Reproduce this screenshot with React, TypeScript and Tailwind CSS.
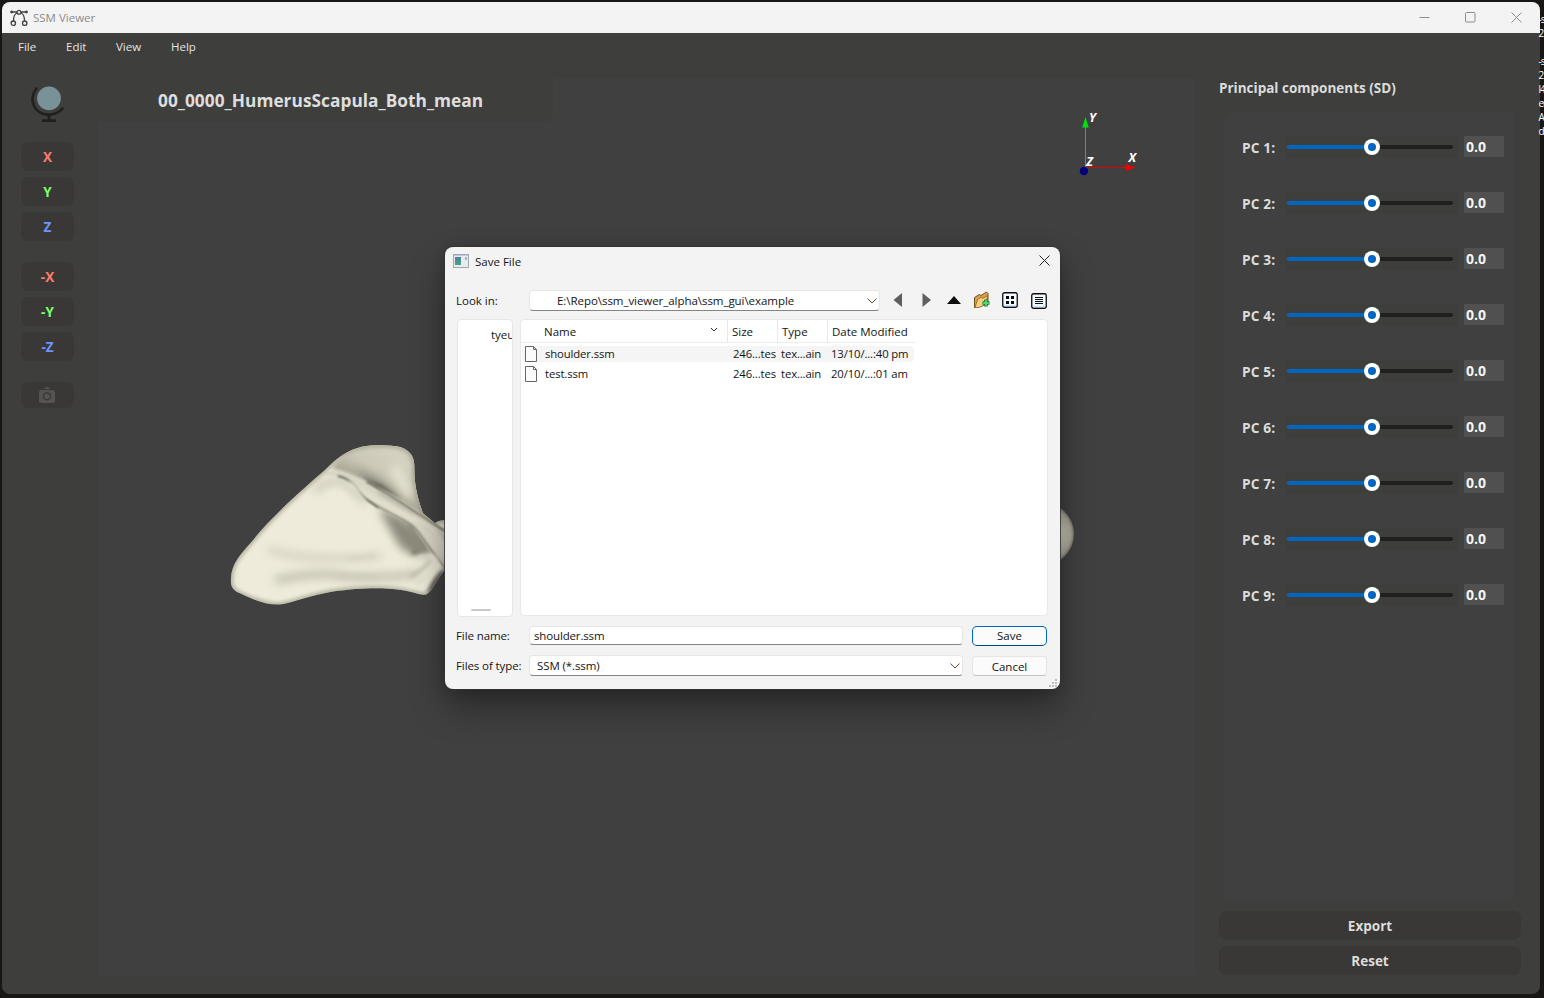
import React from "react";

const axisButtons = [
  [
    { label: "X", tone: "text-[#ff7b6e]" },
    { label: "Y", tone: "text-[#7dff6e]" },
    { label: "Z", tone: "text-[#6e94ff]" },
  ],
  [
    { label: "-X", tone: "text-[#ff7b6e]" },
    { label: "-Y", tone: "text-[#7dff6e]" },
    { label: "-Z", tone: "text-[#6e94ff]" },
  ],
];

const components = [1, 2, 3, 4, 5, 6, 7, 8, 9];

const files = [
  { name: "shoulder.ssm", size: "246...tes", type: "tex...ain", date: "13/10/...:40 pm" },
  { name: "test.ssm", size: "246...tes", type: "tex...ain", date: "20/10/...:01 am" },
];

function TitleBar() {
  return (
    <div className="flex h-[31px] shrink-0 items-center bg-[#f3f3f3] pl-2">
      <svg width="18" height="18" viewBox="0 0 18 18" fill="none" stroke="#444" strokeWidth="1.3">
        <circle cx="9" cy="3.200" r="1.900" />
        <path d="M2 3h5M11 3h5M7.200 4C4 5 3.500 8 3.500 12M10.800 4C14 5 14.500 8 14.500 12" />
        <circle cx="3.300" cy="14.200" r="2.200" />
        <circle cx="14.700" cy="14.200" r="2.200" />
        <circle cx="1.600" cy="3" r=".8" fill="#444" />
        <circle cx="16.400" cy="3" r=".8" fill="#444" />
      </svg>
      <span className="ml-[5px] text-[11.5px] text-[#8b8b8b]">SSM Viewer</span>
      <div className="ml-auto flex items-center gap-[35px] pr-[18px]">
        <svg width="11" height="11" viewBox="0 0 11 11" stroke="#8d8d8d"><path d="M.5 5.500h10" /></svg>
        <svg width="11" height="11" viewBox="0 0 11 11" fill="none" stroke="#8d8d8d"><rect x=".5" y=".5" width="9.500" height="9.500" rx="1" /></svg>
        <svg width="11" height="11" viewBox="0 0 11 11" stroke="#8d8d8d"><path d="M.5 .5l10 10M10.500 .5l-10 10" /></svg>
      </div>
    </div>
  );
}

function Sidebar() {
  return (
    <div className="flex w-24 shrink-0 flex-col pl-[19px] pt-[25px]">
      <svg className="ml-2.5" width="34" height="37" viewBox="0 0 34 37" fill="none">
        <path d="M5.500 2.500C-.5 10 .5 20 7.500 25.500C15 31 26 29 31.500 22.500" stroke="#20201e" strokeWidth="2.700" strokeLinecap="round" />
        <path d="M18 28v6M11 34.700h14" stroke="#20201e" strokeWidth="2.800" />
        <circle cx="18" cy="12.300" r="11.900" fill="#789297" />
      </svg>
      <div className="mt-[19px] flex flex-col gap-[21px]">
        {axisButtons.map((group, i) => (
          <div key={i} className="flex flex-col gap-1.5">
            {group.map((b) => (
              <button key={b.label} className={`h-[29px] w-[53px] rounded-[7px] bg-[#3a3836] pt-px text-[13.500px] font-bold leading-[28px] ${b.tone}`}>
                {b.label}
              </button>
            ))}
          </div>
        ))}
      </div>
      <button className="mt-[21px] flex h-[26px] w-[53px] items-center justify-center rounded-[7px] bg-[#3a3836] pr-px">
        <svg width="16" height="16" viewBox="0 0 16 16">
          <path d="M5 2Q5.500 0 8 0T11 2Z" fill="#535353" />
          <rect y="3" width="16" height="13" rx="2.500" fill="#535353" />
          <circle cx="8" cy="9.300" r="3.500" fill="none" stroke="#3a3836" strokeWidth="1.200" />
        </svg>
      </button>
    </div>
  );
}

function AxisGizmo() {
  return (
    <svg className="absolute left-[972px] top-[22px]" width="80" height="80" viewBox="0 0 80 80" fontFamily="'Open Sans', sans-serif" fontStyle="italic" fontWeight="700" fontSize="12.500">
      <path d="M15.500 70V26" stroke="#00d800" />
      <path d="M16 67.500h45" stroke="#e00000" />
      <path d="M15.500 17l3.300 10.500h-6.600z" fill="#00e010" />
      <path d="M65.500 67.600l-10 3.500v-7z" fill="#f00000" />
      <circle cx="13.900" cy="71" r="4.200" fill="#00007a" />
      <g fill="#fff">
        <text x="19" y="21.800">Y</text>
        <text x="16.200" y="65.500">Z</text>
        <text x="58.500" y="62">X</text>
      </g>
    </svg>
  );
}

function BoneModel() {
  const outline =
    "M48 445C50 400 75 375 110 335C170 260 260 180 330 120C370 78 400 60 440 50C480 43 530 45 555 51C590 62 598 85 598 110C597 170 610 210 624 250L660 280C672 270 690 268 720 272V420H690C670 440 655 480 635 493C620 498 600 486 560 480C500 472 440 473 350 485C290 495 240 515 200 523C160 528 110 507 75 490C50 480 46 465 48 445Z";
  return (
    <>
      <svg className="absolute left-[117px] top-[352px]" width="240" height="190" viewBox="0 0 720 570">
        <defs>
          <clipPath id="bone"><path d={outline} /></clipPath>
          <filter id="b2" filterUnits="userSpaceOnUse" x="0" y="0" width="720" height="570"><feGaussianBlur stdDeviation="2.500" /></filter>
          <filter id="b4" filterUnits="userSpaceOnUse" x="0" y="0" width="720" height="570"><feGaussianBlur stdDeviation="6" /></filter>
          <filter id="b12" filterUnits="userSpaceOnUse" x="0" y="0" width="720" height="570"><feGaussianBlur stdDeviation="15" /></filter>
          <linearGradient id="blade" x1="430" y1="150" x2="490" y2="45" gradientUnits="userSpaceOnUse">
            <stop offset="0" stopColor="#aaa797" />
            <stop offset=".45" stopColor="#cbc8b7" />
            <stop offset="1" stopColor="#d4d1c0" />
          </linearGradient>
        </defs>
        <g clipPath="url(#bone)">
          <rect width="720" height="570" fill="#eeebda" />
          <path d="M350 115C400 50 480 30 565 41C620 80 600 170 640 270L450 150Z" fill="url(#blade)" filter="url(#b4)" />
          <path d="M535 110Q560 150 580 205" stroke="#e6e3d2" strokeWidth="30" fill="none" filter="url(#b12)" />
          <path d="M415 125C475 120 530 190 610 245L470 165Z" fill="#77756a" opacity=".7" filter="url(#b12)" />
          <path d="M435 140L500 165L560 210L470 165Z" fill="#55544c" filter="url(#b4)" />
          <path d="M300 185Q335 145 385 155Q420 180 450 220" stroke="#b3b0a0" strokeWidth="12" fill="none" filter="url(#b12)" />
          <path d="M490 235C550 250 620 290 650 370C600 385 560 370 540 325Z" fill="#8a887a" filter="url(#b12)" />
          <path d="M575 278C600 290 625 315 642 362C615 366 595 350 590 325Z" fill="#8d8b7c" filter="url(#b4)" />
          <path d="M325 134C350 118 370 120 400 134L460 155L540 200L620 252L690 304L720 320V412H690L650 370L590 285L490 234L450 200L395 142Z" fill="#d8d5c4" filter="url(#b2)" />
          <path d="M455 208C500 240 570 265 598 293C625 320 635 350 690 413" fill="none" stroke="#77756a" strokeWidth="5" filter="url(#b2)" />
          <path d="M368 138C395 142 412 158 425 172C440 189 445 200 460 211L490 233" fill="none" stroke="#45443d" strokeWidth="4" filter="url(#b2)" />
          <path d="M455 155C520 190 580 235 690 303" fill="none" stroke="#4e4c43" strokeWidth="5" filter="url(#b2)" />
          <path d="M490 185Q560 225 610 265T700 335" fill="none" stroke="#b2afa0" strokeWidth="10" filter="url(#b4)" />
          <path d="M400 155Q490 223 590 262T690 375" fill="none" stroke="#e6e3d1" strokeWidth="12" filter="url(#b4)" />
          <path d="M590 366Q620 376 645 370" stroke="#3c3b34" strokeWidth="7" fill="none" filter="url(#b4)" />
          <path d="M605 386Q645 365 665 395Q645 440 600 465" stroke="#e6e3d1" strokeWidth="16" fill="none" filter="url(#b4)" />
          <path d="M638 490Q650 445 690 415V490Z" fill="#33322d" filter="url(#b4)" />
          <path d="M160 360Q310 400 500 378" stroke="#d0cdbb" strokeWidth="18" fill="none" filter="url(#b12)" />
          <path d="M400 386Q440 384 480 375" stroke="#d0cdbb" strokeWidth="6" fill="none" filter="url(#b4)" />
          <path d="M180 452Q300 425 375 437T610 432" stroke="#bcb9a7" strokeWidth="20" fill="none" filter="url(#b12)" />
          <path d="M370 437H480" stroke="#cfccba" strokeWidth="8" fill="none" filter="url(#b4)" />
          <path d="M585 440Q625 420 648 390" stroke="#b3b0a0" strokeWidth="8" fill="none" filter="url(#b4)" />
          <path d={outline} fill="none" stroke="#8b8977" strokeWidth="8" filter="url(#b4)" />
        </g>
      </svg>
      <svg className="absolute left-[928px] top-[424px]" width="52" height="66" viewBox="0 0 52 66">
        <defs>
          <radialGradient id="head"><stop offset=".6" stopColor="#cfccba" /><stop offset=".9" stopColor="#a9a797" /><stop offset="1" stopColor="#77756a" /></radialGradient>
        </defs>
        <ellipse cx="15" cy="32" rx="33" ry="32" fill="url(#head)" />
      </svg>
    </>
  );
}

function Viewport() {
  return (
    <div className="relative mt-[17px] h-[897px] w-[1097px] shrink-0 overflow-hidden bg-[#404040]">
      <div className="h-11 w-[455px] rounded-br-md bg-[#3e3e3c] pl-[60px] text-[17.300px] font-bold leading-[45px] tracking-[0.03px] text-[#dedede]">
        00_0000_HumerusScapula_Both_mean
      </div>
      <AxisGizmo />
      <BoneModel />
    </div>
  );
}

function ComponentPanel() {
  return (
    <div className="flex flex-col pl-6 pt-[17px] font-bold text-[#dcdcdc]">
      <h2 className="h-[35px] text-[13.500px] leading-[20px]">Principal components (SD)</h2>
      <div className="ml-[5px] flex h-[787px] w-[290px] flex-col gap-[34px] rounded-l-[7px] bg-[#404040] pl-[18px] pt-[23px]">
        {components.map((n) => (
          <div key={n} className="flex h-[22px] items-center">
            <span className="w-11 pt-[3px] text-[13.700px] tracking-[0.15px]">PC {n}:</span>
            <div className="relative flex h-[22px] w-[172px] items-center bg-[#3e3e3c] pl-px">
              <div className="h-1 w-[85px] rounded-l-sm bg-[#0067c0]" />
              <div className="h-1 w-[81px] rounded-r-sm bg-[#20201e]" />
              <div className="absolute left-[78px] top-[3px] flex size-4 items-center justify-center rounded-full bg-white">
                <div className="size-[7.500px] rounded-full bg-[#0067c0]" />
              </div>
            </div>
            <div className="mb-px ml-1.5 h-[21px] w-10 bg-[#505050] pl-0.5 text-[14px] leading-[21px] text-[#f5f5f5]">0.0</div>
          </div>
        ))}
      </div>
      <button className="mt-[11px] h-[29px] w-[302px] rounded-lg bg-[#3a3836] pt-0.5 text-[13.500px]">Export</button>
      <button className="mt-1.5 h-[29px] w-[302px] rounded-lg bg-[#3a3836] pt-0.5 text-[13.500px]">Reset</button>
    </div>
  );
}

function Chevron() {
  return (
    <svg className="ml-auto" width="10" height="6" viewBox="0 0 10 6" fill="none" stroke="#6b4a35"><path d="M.5 .5L5 5L9.500 .5" /></svg>
  );
}

function DialogTools() {
  return (
    <div className="ml-[13px] flex items-center">
      <svg className="mb-px" width="9" height="14" viewBox="0 0 9 14"><path d="M9 0v14L0.500 7z" fill="#5f5f5f" /></svg>
      <svg className="mb-px ml-5" width="9" height="14" viewBox="0 0 9 14"><path d="M.5 0v14L9 7z" fill="#5f5f5f" /></svg>
      <svg className="mb-px ml-4" width="14" height="8" viewBox="0 0 14 8"><path d="M0 8h14L7 0z" fill="#0c0c0c" /></svg>
      <svg className="mb-px ml-3" width="18" height="18" viewBox="0 0 18 18">
        <path d="M1.500 16.500V6.500L6.500 3.500L8 4.500L13.500 1L15 2.500V13Z" fill="#dca04a" stroke="#76501c" />
        <path d="M2 16.500L4.500 8.500L8.500 6L9.500 7.500L14.500 4.500L13 13.500L6 16.500Z" fill="#f8cf7e" stroke="#85602a" strokeWidth=".8" />
        <path d="M13 8.500v7M9.500 12h7" stroke="#1a7c38" strokeWidth="3.600" />
        <path d="M13 9.300v5.400M10.300 12h5.400" stroke="#4cdc70" strokeWidth="1.900" />
      </svg>
      <svg className="mb-px ml-[11px]" width="16" height="16" viewBox="0 0 16 16">
        <rect x=".75" y=".75" width="14.500" height="14.500" rx="1.800" fill="#f5faff" stroke="#0b0d12" strokeWidth="1.300" />
        <path d="M2 13.800h12" stroke="#bcd6f4" />
        <path d="M4 4h3v3H4zM9 4h3v3H9zM4 9h3v3H4zM9 9h3v3H9z" fill="#080808" />
      </svg>
      <svg className="ml-[13px] mt-px" width="16" height="16" viewBox="0 0 16 16">
        <rect x=".75" y=".75" width="14.500" height="14.500" rx="1.800" fill="#f5faff" stroke="#0b0d12" strokeWidth="1.300" />
        <path d="M2 13.800h12" stroke="#bcd6f4" />
        <path d="M4 4.500h8M4 6.500h8M4 8.500h8M4 10.500h8" stroke="#111" />
      </svg>
    </div>
  );
}

function FileIcon() {
  return (
    <svg className="mb-px shrink-0" width="12" height="16" viewBox="0 0 12 16" fill="#fbfbfb" stroke="#666"><path d="M.5 .5h8l3 3v12H.500zM8.500 .5v3h3" /></svg>
  );
}

function FileTable() {
  return (
    <div className="ml-[7px] h-[297px] w-[528px] overflow-hidden rounded-[4px] border border-[#e8e8e8] bg-white">
      <div className="flex h-[23px] w-[395px] border-b border-[#ececec] leading-[24px]">
        <div className="flex w-[207px] border-r border-[#e8e8e8] pl-[23px]">
          Name
          <svg className="ml-auto mr-[9px] mt-[7px]" width="8" height="6" viewBox="0 0 8 6" fill="none" stroke="#333"><path d="M1 1l3 3l3-3" /></svg>
        </div>
        <div className="w-[50px] border-r border-[#e8e8e8] pl-1">Size</div>
        <div className="w-[50px] border-r border-[#e8e8e8] pl-1">Type</div>
        <div className="pl-1">Date Modified</div>
      </div>
      <div className="pt-px text-[11.300px] tracking-[-0.12px]">
        {files.map((f, i) => (
          <div key={f.name} className="flex h-5 items-center">
            <div className={`ml-px flex h-4 w-[392px] items-center rounded pl-[3px] ${i === 0 ? "bg-[#f5f5f5]" : ""}`}>
              <FileIcon />
              <span className="ml-2 w-[188px]">{f.name}</span>
              <span className="w-12 whitespace-nowrap">{f.size}</span>
              <span className="w-[50px] whitespace-nowrap">{f.type}</span>
              <span className="whitespace-nowrap">{f.date}</span>
            </div>
          </div>
        ))}
      </div>
    </div>
  );
}

function SaveDialog() {
  return (
    <div className="absolute left-[445px] top-[247px] flex h-[442px] w-[615px] flex-col rounded-lg bg-[#f3f3f3] text-[11.500px] leading-4 text-[#141414] shadow-[0_0_0_1px_rgba(50,50,50,0.8),0_18px_34px_rgba(0,0,0,0.36),0_2px_14px_rgba(0,0,0,0.16)]">
      <div className="flex h-[43px] items-start pl-2 pt-[7px]">
        <svg width="16" height="14" viewBox="0 0 16 14">
          <defs><linearGradient id="app" x2="0" y2="1"><stop stopColor="#4d7db3" /><stop offset="1" stopColor="#4ba477" /></linearGradient></defs>
          <rect x=".5" y=".5" width="15" height="13" fill="#e8ebed" stroke="#a0a8b2" />
          <path d="M1 1.500h14" stroke="#c3cad1" />
          <path d="M2 3h6v8H2z" fill="url(#app)" />
          <path d="M12 3h2v3h-2z" fill="#8fbccb" />
        </svg>
        <span className="ml-1.5">Save File</span>
        <svg className="ml-auto mr-2.5 mt-px" width="11" height="11" viewBox="0 0 11 11" stroke="#222"><path d="M.5 .5l10 10M10.500 .5l-10 10" /></svg>
      </div>
      <div className="flex h-[21px] items-center pl-[11px]">
        <span className="w-[73px] shrink-0">Look in:</span>
        <div className="flex h-[21px] w-[351px] shrink-0 items-center rounded-[4px] border border-[#e6e6e6] border-b-[#858585] bg-white pl-[27px] pr-0.5 tracking-[-0.05px]">
          E:\Repo\ssm_viewer_alpha\ssm_gui\example
          <Chevron />
        </div>
        <DialogTools />
      </div>
      <div className="mt-2 flex pl-3">
        <div className="relative h-[298px] w-[56px] overflow-hidden rounded-[4px] border border-[#e6e6e6] bg-white pl-[33px] pt-[7px]">
          tyeu
          <div className="absolute bottom-[5px] left-[13px] h-[2px] w-5 rounded bg-[#c9c9c9]" />
        </div>
        <FileTable />
      </div>
      <div className="mt-[9px] flex h-5 items-center pl-[11px]">
        <span className="w-[73px] shrink-0 tracking-[-0.1px]">File name:</span>
        <div className="mb-px h-[19px] w-[434px] shrink-0 rounded-[4px] border border-[#e6e6e6] border-b-[#858585] bg-white pl-1 leading-[18px] tracking-[-0.15px]">shoulder.ssm</div>
        <button className="ml-[9px] h-5 w-[75px] shrink-0 rounded-[5px] border border-[#0067c0] border-b-[#004a8c] bg-[#fbfbfb]">Save</button>
      </div>
      <div className="mt-[9px] flex h-[21px] items-center pl-[11px]">
        <span className="w-[73px] shrink-0 tracking-[-0.1px]">Files of type:</span>
        <div className="flex h-[21px] w-[434px] shrink-0 items-center rounded-[4px] border border-[#e6e6e6] border-b-[#858585] bg-white pl-[7px] pr-0.5 tracking-[-0.1px]">
          SSM (*.ssm)
          <Chevron />
        </div>
        <button className="ml-[9px] mt-px h-5 w-[75px] shrink-0 rounded-[4px] border border-[#e6e6e6] border-b-[#c4c4c4] bg-[#fbfbfb] pt-px leading-[17px]">Cancel</button>
      </div>
      <svg className="absolute bottom-0.5 right-[3px]" width="8" height="8" viewBox="0 0 8 8" fill="#bdbdbd"><path d="M6 0h2v2H6zM3 3h2v2H3zM6 3h2v2H6zM0 6h2v2H0zM3 6h2v2H3zM6 6h2v2H6z" /></svg>
    </div>
  );
}

export default function App() {
  return (
    <div className="relative h-[998px] w-[1544px] overflow-hidden bg-[#181715] pl-0.5 pt-0.5 [font-family:'Open_Sans','Noto_Sans',sans-serif]">
      <div className="flex h-[992px] w-[1538px] flex-col overflow-hidden rounded-lg bg-[#3e3e3c]">
        <TitleBar />
        <div className="flex h-7 shrink-0 pl-4 text-[11.500px] leading-[27px] text-[#e4e4e4]">
          <span className="w-12">File</span>
          <span className="w-[50px]">Edit</span>
          <span className="w-[55px]">View</span>
          <span>Help</span>
        </div>
        <div className="flex">
          <Sidebar />
          <Viewport />
          <ComponentPanel />
        </div>
      </div>
      <div className="absolute left-[1538.500px] top-3 w-5 whitespace-pre text-[10px] leading-[14px] tracking-[-1px] text-white">
        {"-s\n2\n\n-s\n2\nl4\neu\nA\nda"}
      </div>
      <SaveDialog />
    </div>
  );
}
